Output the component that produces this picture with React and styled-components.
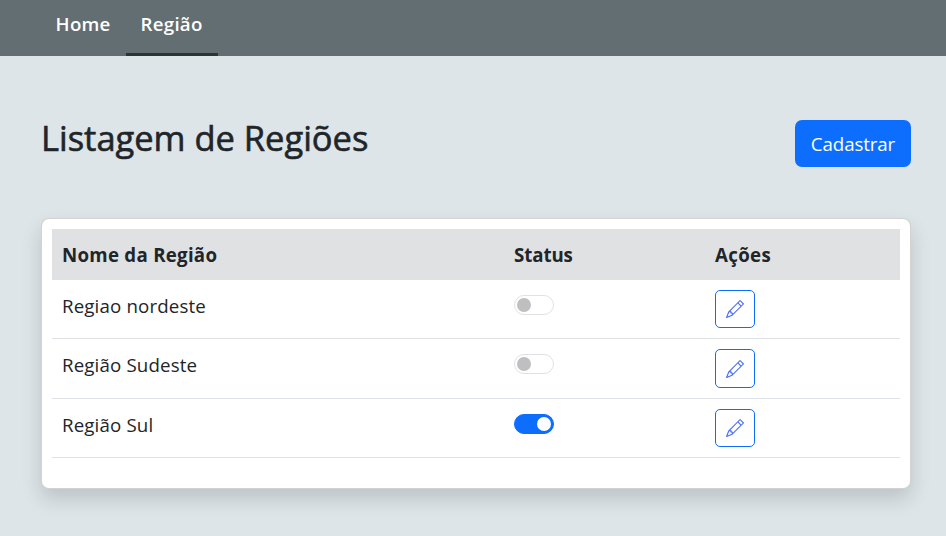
import React, { useState } from "react";
import styled, { createGlobalStyle } from "styled-components";
import { BsPencil } from "react-icons/bs";

const GlobalStyle = createGlobalStyle`
  *, *::before, *::after { box-sizing: border-box; }
  body {
    margin: 0;
    min-height: 100vh;
    background: #dde5e8;
    color: #212529;
    font-family: "Segoe UI", "Open Sans", "Noto Sans", sans-serif;
    font-size: 18.7px;
    line-height: 30px;
  }
`;

const Navbar = styled.nav`
  display: flex;
  height: 56px;
  padding-left: 41px;
  background: #636e72;
`;

const NavLink = styled.a`
  width: ${({ $width }) => $width}px;
  padding: 9px 0 0 14.6px;
  border-bottom: 3px solid ${({ $active }) => ($active ? "#2d3436" : "transparent")};
  color: #fff;
  font-size: 18.7px;
  font-weight: 600;
  letter-spacing: 0.25px;
  white-space: nowrap;
  text-decoration: none;
`;

const Main = styled.main`
  padding: 64px 35px 0 41px;
`;

const Header = styled.header`
  display: flex;
  justify-content: space-between;
  align-items: flex-start;
  height: 98px;
`;

const Title = styled.h1`
  margin: -5px 0 0;
  font-size: 34.5px;
  font-weight: 500;
  line-height: 46px;
  letter-spacing: -0.02px;
  white-space: nowrap;
  -webkit-text-stroke: 0.6px currentColor;
`;

const PrimaryButton = styled.button`
  width: 116px;
  height: 47px;
  padding: 0;
  border: 0;
  border-radius: 7px;
  background: #0d6efd;
  color: #fff;
  font: inherit;
  letter-spacing: -0.1px;
`;

const Card = styled.section`
  height: 271px;
  padding: 10px;
  border: 1px solid rgba(0, 0, 0, 0.175);
  border-radius: 8px;
  background: #fff;
  box-shadow: 0 10px 20px rgba(0, 0, 0, 0.15);
`;

const Row = styled.div`
  display: grid;
  grid-template-columns: 452px 201px 1fr;
  align-items: start;
  height: ${({ $height }) => $height}px;
  padding: 10px 10px 0;
  border-bottom: 1px solid #dee2e6;
`;

const HeadRow = styled(Row)`
  padding-top: 11px;
  border-bottom: 0;
  background: #e0e1e3;
  font-weight: 700;
`;

const Cell = styled.div`
  letter-spacing: ${({ $spacing = 0 }) => $spacing}px;
  white-space: nowrap;
`;

const NameCell = styled(Cell)`
  padding-top: 1px;
`;

const Switch = styled.button`
  display: flex;
  align-items: center;
  justify-content: ${({ $on }) => ($on ? "flex-end" : "flex-start")};
  width: 40px;
  height: 20px;
  margin: 5px 0 0;
  padding: 0 2px;
  border: 1px solid ${({ $on }) => ($on ? "#0d6efd" : "#dee2e6")};
  border-radius: 10px;
  background: ${({ $on }) => ($on ? "#0d6efd" : "#fff")};
`;

const Knob = styled.span`
  width: 14px;
  height: 14px;
  border-radius: 50%;
  background: ${({ $on }) => ($on ? "#fff" : "#bfbfbf")};
`;

const EditButton = styled.button`
  display: flex;
  align-items: center;
  justify-content: center;
  width: 40px;
  height: ${({ $height }) => $height}px;
  padding: 0;
  border: 1px solid #0d6efd;
  border-radius: 5px;
  background: transparent;
  color: #0d6efd;
`;

const PencilIcon = styled(BsPencil)`
  color: #4a6cf7;
`;

const regions = [
  { name: "Regiao nordeste", active: false, height: 59, button: 38 },
  { name: "Região Sudeste", active: false, height: 60, button: 39 },
  { name: "Região Sul", active: true, height: 59, button: 38 },
];

function RegionRow({ region }) {
  const [on, setOn] = useState(region.active);
  return (
    <Row $height={region.height}>
      <NameCell $spacing={0.15}>{region.name}</NameCell>
      <Cell>
        <Switch role="switch" aria-checked={on} $on={on} onClick={() => setOn(!on)}>
          <Knob $on={on} />
        </Switch>
      </Cell>
      <Cell>
        <EditButton aria-label="Editar" $height={region.button}>
          <PencilIcon size={18} />
        </EditButton>
      </Cell>
    </Row>
  );
}

export default function App() {
  return (
    <>
      <GlobalStyle />
      <Navbar>
        <NavLink $width={85}>Home</NavLink>
        <NavLink $width={92} $active>Região</NavLink>
      </Navbar>
      <Main>
        <Header>
          <Title>Listagem de Regiões</Title>
          <PrimaryButton>Cadastrar</PrimaryButton>
        </Header>
        <Card>
          <HeadRow $height={51}>
            <Cell $spacing={0.27}>Nome da Região</Cell>
            <Cell $spacing={-0.1}>Status</Cell>
            <Cell $spacing={0.35}>Ações</Cell>
          </HeadRow>
          {regions.map((region) => (
            <RegionRow key={region.name} region={region} />
          ))}
        </Card>
      </Main>
    </>
  );
}
